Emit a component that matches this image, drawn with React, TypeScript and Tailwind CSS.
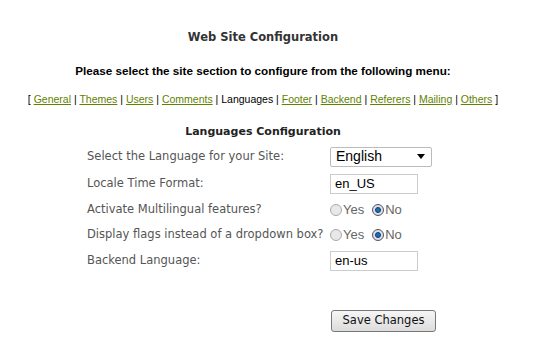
import React from "react";

const Radio = ({ checked }: { checked?: boolean }) => (
  <span
    className={
      "inline-flex items-center justify-center w-[12px] h-[12px] rounded-full border " +
      (checked ? "border-[#555] bg-[#dde]" : "border-[#aaa] bg-[#e8e8e8]")
    }
  >
    {checked && <span className="block w-[6px] h-[6px] rounded-full bg-[#1e6fb0] border border-[#0b3f6e]" />}
  </span>
);

const links = ["General", "Themes", "Users", "Comments", "Languages", "Footer", "Backend", "Referers", "Mailing", "Others"];

export default function App() {
  const label =
    "flex items-center whitespace-nowrap text-[11.5px] text-[#555] [font-family:'DejaVu_Sans',Verdana,sans-serif]";
  const radios = (h: string) => (
    <div className={h + " flex items-center text-[13px] text-[#666]"}>
      <Radio />
      <span className="ml-[1px]">Yes</span>
      <span className="ml-[8px] flex">
        <Radio checked />
      </span>
      <span className="ml-[1px]">No</span>
    </div>
  );
  return (
    <div className="w-[536px] h-[363px] bg-white">
      <div className="w-[526px] [font-family:'Liberation_Sans',Arial,sans-serif]">
        <div className="pt-[30px] leading-[14px] text-center text-[11.5px] font-bold text-[#333] [font-family:'DejaVu_Sans',Verdana,sans-serif]">
          Web Site Configuration
        </div>
        <div className="mt-[20px] leading-[14px] text-center text-[11.7px] font-bold text-black">
          Please select the site section to configure from the following menu:
        </div>
        <div className="mt-[14px] leading-[14px] text-center text-[10.5px] text-black">
          [{" "}
          {links.map((l, i) => (
            <React.Fragment key={l}>
              {l === "Languages" ? <span>{l}</span> : <a className="text-[#5f8200] underline">{l}</a>}
              {i < links.length - 1 ? " | " : " "}
            </React.Fragment>
          ))}
          ]
        </div>
        <div className="mt-[19px] leading-[14px] text-center text-[11px] font-bold text-[#222] [font-family:'DejaVu_Sans',Verdana,sans-serif]">
          Languages Configuration
        </div>
      </div>
      <div className="mt-[4px] pl-[87px] grid grid-cols-[243px_1fr] [font-family:'Liberation_Sans',Arial,sans-serif]">
        <div className={label + " h-[27px]"}>Select the Language for your Site:</div>
        <div className="h-[27px] flex items-center">
          <div className="w-[102px] h-[20px] border border-[#bbb] rounded-[2px] flex items-center justify-between pl-[5px] pr-[6px] text-[14px] text-black bg-white">
            <span>English</span>
            <svg width="8" height="5" viewBox="0 0 8 5">
              <path d="M0 0h8L4 5z" fill="#000" />
            </svg>
          </div>
        </div>
        <div className={label + " h-[27px]"}>Locale Time Format:</div>
        <div className="h-[27px] flex items-center">
          <div className="w-[88px] h-[20px] border border-[#ccc] flex items-center pl-[4px] text-[13px] text-black">en_US</div>
        </div>
        <div className={label + " h-[25px]"}>Activate Multilingual features?</div>
        {radios("h-[25px]")}
        <div className={label + " h-[26px]"}>Display flags instead of a dropdown box?</div>
        {radios("h-[26px]")}
        <div className={label + " h-[26px]"}>Backend Language:</div>
        <div className="h-[26px] flex items-center">
          <div className="w-[88px] h-[20px] border border-[#ccc] flex items-center pl-[4px] text-[13px] text-black">en-us</div>
        </div>
      </div>
      <div className="mt-[36px] pl-[331px] flex">
        <button className="w-[105px] h-[22px] border border-[#777] rounded-[3px] bg-gradient-to-b from-[#f6f6f6] to-[#dcdcdc] text-[11.5px] text-[#111] [font-family:'DejaVu_Sans',Verdana,sans-serif]">
          Save Changes
        </button>
      </div>
    </div>
  );
}
